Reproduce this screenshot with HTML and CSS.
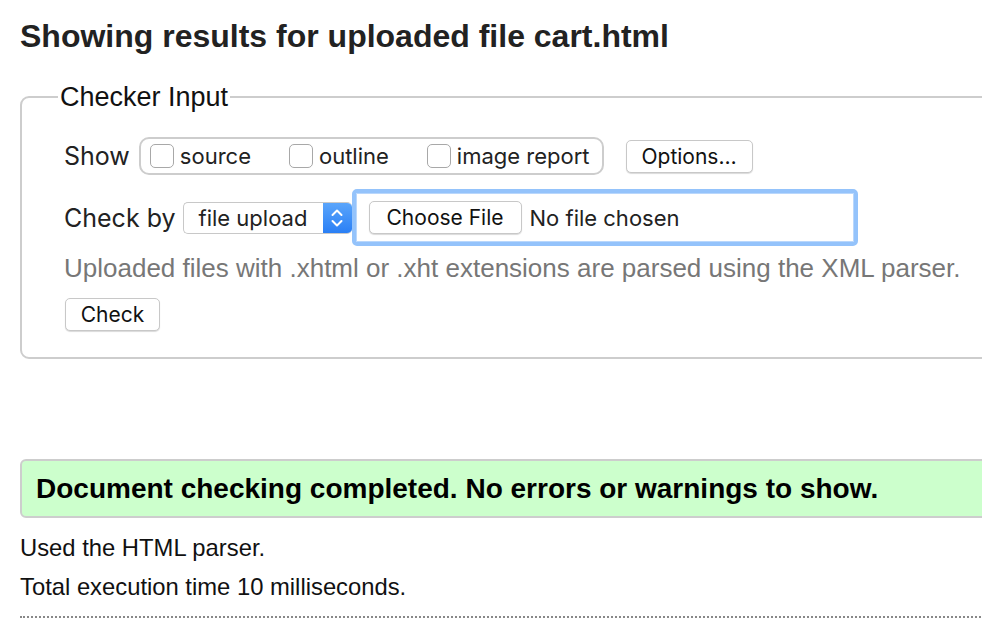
FILE: index.html
```html
<!DOCTYPE html>
<html>
<head>
<meta charset="utf-8">
<link rel="stylesheet" href="styles.css">
</head>
<body>
<div class="page">
  <h2 class="title">Showing results for uploaded file cart.html</h2>
  <fieldset class="checker">
    <legend class="legend">Checker Input</legend>
    <div class="row row-show">
      <span class="label">Show</span>
      <div class="group">
        <label class="opt"><span class="cb"></span>source</label>
        <label class="opt"><span class="cb"></span>outline</label>
        <label class="opt"><span class="cb"></span>image report</label>
      </div>
      <button class="btn btn-options">Options…</button>
    </div>
    <div class="row row-by">
      <span class="label">Check by</span>
      <div class="select">
        <span class="select-text">file upload</span>
        <span class="select-arrow">
          <svg width="14" height="22" viewBox="0 0 14 22"><path d="M2.5 8 L7 3.5 L11.5 8 M2.5 14 L7 18.5 L11.5 14" fill="none" stroke="#fff" stroke-width="2" stroke-linecap="round" stroke-linejoin="round"/></svg>
        </span>
      </div>
      <div class="file">
        <span class="btn btn-choose">Choose File</span>
        <span class="file-text">No file chosen</span>
      </div>
    </div>
    <p class="help">Uploaded files with .xhtml or .xht extensions are parsed using the XML parser.</p>
    <div class="row row-check">
      <button class="btn btn-check">Check</button>
    </div>
  </fieldset>
  <div class="success">Document checking completed. No errors or warnings to show.</div>
  <p class="info">Used the HTML parser.</p>
  <p class="info">Total execution time 10 milliseconds.</p>
  <hr class="dots">
</div>
</body>
</html>
```
FILE: styles.css
```css
html, body {
  margin: 0;
  padding: 0;
  overflow: hidden;
  background: #fff;
}
body {
  font-family: "Liberation Sans", Arial, sans-serif;
  color: #111;
}
.page {
  width: 1060px;
  padding: 0 0 0 20px;
}
.title {
  margin: 0;
  padding-top: 17px;
  font-size: 32px;
  line-height: 38px;
  font-weight: bold;
  color: #222;
}
.checker {
  margin: 29px 0 0 0;
  border: 2px solid #cdcdcd;
  border-radius: 9px;
  padding: 8px 0 26px 42px;
}
.legend {
  font-size: 27px;
  line-height: 26px;
  padding: 0 2px;
  margin-left: -6px;
  color: #111;
}
.row {
  display: flex;
  align-items: center;
  font-family: Inter, "Open Sans", sans-serif;
  font-size: 22px;
  color: #222;
}
.row-show {
  height: 40px;
  margin-top: 18px;
}
.label {
  font-size: 25px;
}
.group {
  display: flex;
  align-items: center;
  height: 34px;
  border: 2px solid #cdcdcd;
  border-radius: 10px;
  padding: 0 12px 0 9px;
  margin-left: 9px;
}
.opt {
  display: flex;
  align-items: center;
  margin-right: 38px;
}
.opt:last-child {
  margin-right: 0;
}
.cb {
  width: 22px;
  height: 22px;
  border: 1px solid #a8a8a8;
  border-radius: 5px;
  margin-right: 6px;
  background: #fff;
}
.btn {
  font-family: Inter, "Open Sans", sans-serif;
  font-size: 21px;
  color: #111;
  background: #fff;
  border: 1px solid #c8c8c8;
  border-radius: 5px;
  box-shadow: 0 1px 1px rgba(0,0,0,0.15);
  display: inline-flex;
  align-items: center;
  justify-content: center;
  box-sizing: border-box;
}
.btn-options {
  margin-left: 22px;
  width: 127px;
  height: 33px;
  padding: 0;
}
.row-by {
  margin-top: 13px;
  height: 57px;
}
.select {
  display: flex;
  width: 169px;
  height: 32px;
  box-sizing: border-box;
  border: 1px solid #c8c8c8;
  border-right: none;
  border-radius: 5px;
  background: #fff;
  overflow: hidden;
  margin-left: 7px;
}
.select-text {
  flex: 1;
  display: flex;
  align-items: center;
  padding-left: 15px;
}
.select-arrow {
  width: 29px;
  background: linear-gradient(#5aa5fb, #2a7ff5);
  display: flex;
  align-items: center;
  justify-content: center;
}
.file {
  display: flex;
  align-items: center;
  width: 506px;
  height: 57px;
  box-sizing: border-box;
  border: 4px solid #94c3fb;
  border-radius: 5px;
  box-shadow: inset 0 0 0 1px #b9d7fc;
  padding-left: 13px;
  background: #fff;
}
.btn-choose {
  width: 153px;
  height: 33px;
}
.file-text {
  margin-left: 8px;
}
.help {
  margin: 7px 0 0 0;
  font-size: 26px;
  line-height: 30px;
  color: #777;
}
.row-check {
  margin-top: 15px;
}
.btn-check {
  width: 95px;
  height: 33px;
  padding: 0;
  margin-left: 1px;
}
.success {
  margin-top: 100px;
  height: 59px;
  box-sizing: border-box;
  background: #ccffcc;
  border: 2px solid #cdcdcd;
  border-radius: 6px;
  padding-left: 14px;
  display: flex;
  align-items: center;
  font-size: 28px;
  font-weight: bold;
  color: #000;
}
.info {
  margin: 0;
  font-size: 23.8px;
  line-height: 39px;
  color: #111;
}
.info:first-of-type {
  margin-top: 10px;
}
.dots {
  margin: 10px 0 0 0;
  border: 0;
  border-top: 2px dotted #888;
  height: 0;
}
```
